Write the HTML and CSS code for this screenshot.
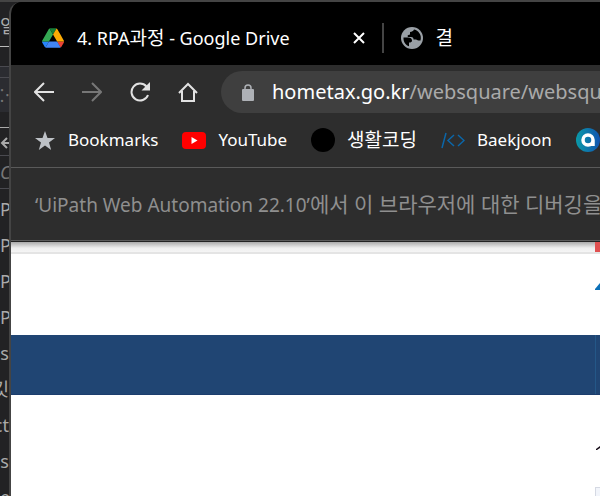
FILE: index.html
```
<!DOCTYPE html>
<html lang="ko">
<head>
<meta charset="utf-8">
<title>4. RPA과정 - Google Drive</title>
<link rel="stylesheet" href="styles.css">
</head>
<body>
<div class="desktop">
  <aside class="editor">
    <div class="editor-head"><span>일</span><i></i></div>
    <div class="editor-strip"></div>
    <div class="editor-tools"><span>⁙</span></div>
    <div class="editor-back"><svg viewBox="0 0 10 12"><path d="M10 6H2M7 1L2 6l5 5"/></svg></div>
    <div class="editor-search"><em>C</em></div>
    <ul class="tree">
      <li>P.</li><li>P.</li><li>P.</li><li>P.</li><li class="tail">es</li><li class="tail">킷</li><li class="tail">ct</li><li class="tail">ns</li><li>e</li>
    </ul>
  </aside>
  <main class="window">
    <header class="tabs">
      <div class="tab">
        <svg class="drive" viewBox="0 0 87 78" aria-hidden="true">
          <path fill="#2684fc" d="M6.600 66.850l3.850 6.650c.8 1.400 1.950 2.500 3.300 3.300l13.750-23.800H0c0 1.550.4 3.100 1.200 4.500z"/>
          <path fill="#34a853" d="M43.650 25L29.900 1.200c-1.350.8-2.500 1.900-3.300 3.300L1.200 48.500A9 9 0 0 0 0 53h27.500z"/>
          <path fill="#ea4335" d="M73.550 76.800c1.350-.8 2.500-1.900 3.300-3.300l1.600-2.750 7.650-13.250c.8-1.400 1.200-2.950 1.200-4.500H59.800l5.850 11.500z"/>
          <path fill="#188038" d="M43.650 25L57.400 1.200C56.050.4 54.500 0 52.900 0H34.400c-1.600 0-3.150.45-4.500 1.200z"/>
          <path fill="#4285f4" d="M59.800 53H27.500L13.750 76.800c1.350.8 2.900 1.200 4.500 1.200h50.800c1.600 0 3.150-.45 4.500-1.200z"/>
          <path fill="#fbab04" d="M73.400 26.500L60.700 4.500c-.8-1.400-1.950-2.500-3.300-3.300L43.650 25 59.800 53h27.450c0-1.550-.4-3.100-1.200-4.500z"/>
        </svg>
        <span class="tab-title">4. RPA<span class="hangul">과정</span> - Google Drive</span>
        <button class="close" aria-label="닫기"><svg viewBox="0 0 12 12"><path d="M1 1l10 10M11 1L1 11"/></svg></button>
      </div>
      <div class="tab next">
        <svg class="globe" viewBox="0 0 22 22" aria-hidden="true"><circle cx="11" cy="11" r="11" fill="#9aa0a6"/><path d="M13 2.500c-1 2-2 2-4 2.500v2.500c-1 .5-2.500.5-2.500 1.500s1 1 3.500 1c2 0 2.500 1 2.500 2.500h2.500c1 0 1 1 2.500 1h2c.8-3 .3-6-2-8.500C16 3.500 14.500 2.800 13 2.500zM2.500 10.500h4.500c2.500 0 4 1 4 3 0 1.500-1 2-3 2v3.700C4.500 18 2.200 14.500 2.500 10.500z"/></svg>
        <span class="hangul">결</span>
      </div>
    </header>
    <nav class="toolbar">
      <button aria-label="뒤로"><svg viewBox="0 0 20 20"><path d="M20 10H2M10 1L1 10l9 9"/></svg></button>
      <button class="off" aria-label="앞으로" disabled><svg viewBox="0 0 20 20"><path d="M0 10h18M10 1l9 9-9 9"/></svg></button>
      <button aria-label="새로고침"><svg viewBox="0 0 20 20"><path d="M16.500 4.500A8.500 8.500 0 1 0 18 13"/><path class="solid" d="M20 0v8.500h-8.500z"/></svg></button>
      <button aria-label="홈"><svg viewBox="0 0 20 20"><path d="M1 11l9-9 9 9M4 9v10h12V9"/></svg></button>
      <div class="address">
        <svg class="lock" viewBox="0 0 12 17" aria-hidden="true"><rect y="5" width="12" height="12" rx="1"/><path d="M3 6V4a3 3 0 0 1 6 0v2"/></svg>
        <span class="url"><b>hometax.go.kr</b>/websquare/websquare</span>
      </div>
    </nav>
    <nav class="bookmarks">
      <a href="#"><svg class="star" viewBox="0 0 20 19"><path fill="#bdc1c6" d="M10 0l2.500 7H20l-6 4.500L16.200 19 10 14.500 3.800 19 6 11.500 0 7h7.500z"/></svg>Bookmarks</a>
      <a href="#"><svg class="youtube" viewBox="0 0 24 17"><rect width="24" height="17" rx="4" fill="red"/><path fill="#fff" d="M9.500 5v7l6-3.500z"/></svg>YouTube</a>
      <a href="#"><svg class="disc" viewBox="0 0 24 24"><circle cx="12" cy="12" r="12"/></svg><span class="hangul">생활코딩</span></a>
      <a href="#"><svg class="code" viewBox="0 0 24 17"><path fill="none" stroke="#0b66a8" stroke-width="1.500" d="M5 1L1 16M13 3L7 8.500l6 5.500M17 3l6 5.500-6 5.500"/></svg>Baekjoon</a>
      <a href="#" aria-label="북마크"><svg class="disc" viewBox="0 0 24 24"><defs><linearGradient id="sea"><stop stop-color="#0a9aa8"/><stop offset="1" stop-color="#1254b0"/></linearGradient></defs><circle cx="12" cy="12" r="12" fill="url(#sea)"/><path fill="none" stroke="#fff" stroke-width="3.500" d="M17 12a5 5 0 1 0-5 5c3 0 5-2 5-5v6"/></svg></a>
    </nav>
    <div class="infobar">‘UiPath Web Automation 22.10’<span>에서 이 브라우저에 대한 디버깅을</span></div>
    <section class="page">
      <div class="page-top"><i></i></div>
      <div class="page-logo"><svg viewBox="0 0 5 9"><path fill="#0b70b8" d="M0 7l5-6v7H0z"/></svg></div>
      <div class="menu-band"><i></i></div>
      <div class="page-body">
        <svg viewBox="0 0 4 4"><path fill="#160c18" d="M0 4V3l4-3v2L1 4z"/></svg>
        <i></i>
      </div>
    </section>
  </main>
</div>
</body>
</html>
```
FILE: styles.css
```
* { box-sizing: border-box; }
body {
  margin: 0;
  background: #222224;
  color: #fff;
  font-family: "Noto Sans", "Noto Sans CJK KR", sans-serif;
  font-size: 18px;
  line-height: 24px;
}
button { background: none; border: 0; padding: 0; color: inherit; display: flex; }
svg { display: block; flex: none; }
.desktop {
  display: grid;
  grid-template-columns: 9px minmax(0, 1fr);
  height: 100vh;
  overflow: hidden;
  border-top: 2px solid #444;
  background: #222224;
}

.editor { overflow: hidden; color: #aaa; white-space: nowrap; }
.editor > div { border-bottom: 1px solid #4a4a50; }
.editor-head { height: 65px; padding-top: 12px; }
.editor-head i { display: block; height: 1px; margin-top: 8px; background: #bbb; }
.editor-strip { height: 11px; background: #2b2c31; }
.editor-tools { height: 50px; color: #777; background: linear-gradient(#2b2c31 34px, #222224 34px); }
.editor .editor-tools { padding-top: 5px; border-color: #aaa; }
.editor-back { height: 28px; padding-top: 9px; }
.editor-back svg { width: 10px; height: 12px; fill: none; stroke: #aaa; stroke-width: 2; }
.editor-search { height: 33px; padding-top: 4px; color: #777; }
.tree { list-style: none; margin: 0; padding: 2px 0 0; line-height: 36px; }
.tree li { display: flex; }
.tree .tail { justify-content: flex-end; }

.window {
  display: flex;
  flex-direction: column;
  overflow: hidden;
  border-left: 2px solid #444;
  border-top-left-radius: 12px;
  background: #2d2d2d;
  white-space: nowrap;
}
.window > * { flex: none; }
.hangul { font-size: 19px; }
.tabs { display: flex; padding: 24px 0 15px 31px; background: #000; }
.tab { display: flex; align-items: center; height: 24px; }
.drive { width: 22px; height: 20px; margin-right: 13px; }
.close { margin: 0 17px 0 63px; }
.close svg { width: 12px; height: 12px; stroke: #fff; stroke-width: 2; fill: none; }
.next { border-left: 2px solid #444; padding-left: 17px; height: 30px; margin: -3px 0; }
.globe { width: 22px; height: 22px; margin-right: 13px; }

.toolbar { display: flex; align-items: center; gap: 28px; padding: 6px 0 6px 23px; }
.toolbar button svg { width: 20px; height: 20px; fill: none; stroke: #e2e2e2; stroke-width: 2; }
.toolbar .off svg { stroke: #777; }
.toolbar .solid { fill: #e2e2e2; stroke: none; }
.address {
  display: flex;
  align-items: center;
  flex: 1;
  min-width: 0;
  height: 42px;
  margin-left: -5px;
  padding-left: 21px;
  gap: 18px;
  border-radius: 21px 0 0 21px;
  background: #3f3f3f;
  overflow: hidden;
  font-size: 20px;
}
.lock { width: 12px; height: 17px; fill: #aeb1b6; }
.lock path { fill: none; stroke: #aeb1b6; stroke-width: 1.5; }
.url { color: #aaa; }
.url b { color: #fff; font-weight: 400; }

.bookmarks { display: flex; gap: 24px; padding: 9px 0 15px 23px; overflow: hidden; font-size: 17px; }
.bookmarks a { display: flex; align-items: center; height: 24px; gap: 12px; color: #fff; text-decoration: none; flex: none; }
.star { width: 22px; height: 19px; }
.youtube { width: 24px; height: 17px; }
.disc { width: 24px; height: 24px; }
.code { width: 24px; height: 17px; }

.infobar {
  padding: 24px 0 23px 24px;
  border-top: 1px solid #5a5a5a;
  border-bottom: 1px solid #5a5a5a;
  color: #8f8f8f;
  font-size: 19px;
  overflow: hidden;
}
.infobar span { font-size: 21px; }
.window > .page { flex: 1; background: #fff; border-top: 1px solid #222; }
.page i { display: block; width: 5px; }
.page-top {
  display: flex;
  justify-content: flex-end;
  height: 12px;
  background: linear-gradient(#aaa, #eee 6px, #f5f5f5);
  border-bottom: 2px solid #e4e4e4;
}
.page-top i { background: #e05050; }
.page-logo { display: flex; justify-content: flex-end; height: 81px; padding-top: 28px; }
.page-logo svg { width: 5px; height: 9px; }
.menu-band { display: flex; justify-content: flex-end; height: 60px; background: #204573; border-bottom: 1px solid #1c3d6d; }
.menu-band i { border-left: 1px solid #245787; }
.page-body { display: flex; flex-direction: column; align-items: flex-end; gap: 37px; padding-top: 51px; }
.page-body svg { width: 4px; height: 4px; }
.page-body i { height: 40px; background: #f2f5fb; border: 1px solid #d5d9e3; border-right: 0; }
```
